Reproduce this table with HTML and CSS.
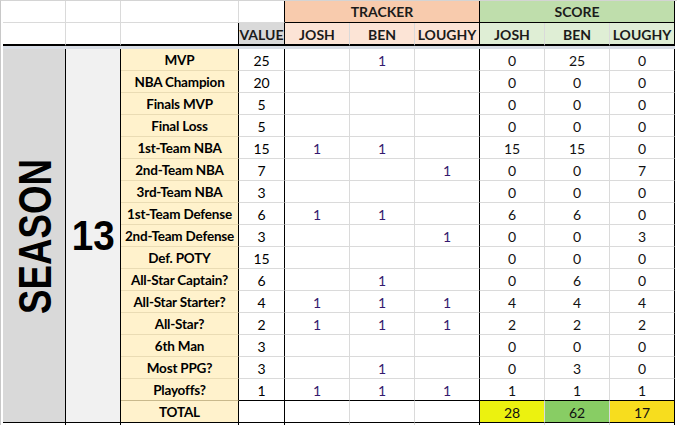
FILE: index.html
```html
<!DOCTYPE html>
<html>
<head>
<meta charset="utf-8">
<link rel="stylesheet" href="styles.css">
</head>
<body>
<div class="sheet">
  <!-- header row 1 -->
  <div class="c"></div><div class="c"></div><div class="c"></div><div class="c bR"></div>
  <div class="c h1 trkh span3 bR bB">TRACKER</div>
  <div class="c h1 scoh span3 bR bB">SCORE</div>
  <!-- header row 2 -->
  <div class="c h2row"></div><div class="c h2row"></div><div class="c h2row bR"></div>
  <div class="c h2row hdr valh bR">VALUE</div>
  <div class="c h2row hdr trks">JOSH</div><div class="c h2row hdr trks">BEN</div><div class="c h2row hdr trks bR">LOUGHY</div>
  <div class="c h2row hdr scos">JOSH</div><div class="c h2row hdr scos">BEN</div><div class="c h2row hdr scos bR">LOUGHY</div>
  <!-- frozen band -->
  <div class="band"></div>
  <!-- merged side cells -->
  <div class="c season"><span class="season-text">SEASON</span></div>
  <div class="c num"><span class="num-text">13</span></div>

  <div class="c lbl">MVP</div><div class="c val">25</div>
  <div class="c t"></div><div class="c t">1</div><div class="c t bR"></div>
  <div class="c s">0</div><div class="c s">25</div><div class="c s bR">0</div>

  <div class="c lbl">NBA Champion</div><div class="c val">20</div>
  <div class="c t"></div><div class="c t"></div><div class="c t bR"></div>
  <div class="c s">0</div><div class="c s">0</div><div class="c s bR">0</div>

  <div class="c lbl">Finals MVP</div><div class="c val">5</div>
  <div class="c t"></div><div class="c t"></div><div class="c t bR"></div>
  <div class="c s">0</div><div class="c s">0</div><div class="c s bR">0</div>

  <div class="c lbl">Final Loss</div><div class="c val">5</div>
  <div class="c t"></div><div class="c t"></div><div class="c t bR"></div>
  <div class="c s">0</div><div class="c s">0</div><div class="c s bR">0</div>

  <div class="c lbl">1st-Team NBA</div><div class="c val">15</div>
  <div class="c t">1</div><div class="c t">1</div><div class="c t bR"></div>
  <div class="c s">15</div><div class="c s">15</div><div class="c s bR">0</div>

  <div class="c lbl">2nd-Team NBA</div><div class="c val">7</div>
  <div class="c t"></div><div class="c t"></div><div class="c t bR">1</div>
  <div class="c s">0</div><div class="c s">0</div><div class="c s bR">7</div>

  <div class="c lbl">3rd-Team NBA</div><div class="c val">3</div>
  <div class="c t"></div><div class="c t"></div><div class="c t bR"></div>
  <div class="c s">0</div><div class="c s">0</div><div class="c s bR">0</div>

  <div class="c lbl">1st-Team Defense</div><div class="c val">6</div>
  <div class="c t">1</div><div class="c t">1</div><div class="c t bR"></div>
  <div class="c s">6</div><div class="c s">6</div><div class="c s bR">0</div>

  <div class="c lbl">2nd-Team Defense</div><div class="c val">3</div>
  <div class="c t"></div><div class="c t"></div><div class="c t bR">1</div>
  <div class="c s">0</div><div class="c s">0</div><div class="c s bR">3</div>

  <div class="c lbl">Def. POTY</div><div class="c val">15</div>
  <div class="c t"></div><div class="c t"></div><div class="c t bR"></div>
  <div class="c s">0</div><div class="c s">0</div><div class="c s bR">0</div>

  <div class="c lbl">All-Star Captain?</div><div class="c val">6</div>
  <div class="c t"></div><div class="c t">1</div><div class="c t bR"></div>
  <div class="c s">0</div><div class="c s">6</div><div class="c s bR">0</div>

  <div class="c lbl">All-Star Starter?</div><div class="c val">4</div>
  <div class="c t">1</div><div class="c t">1</div><div class="c t bR">1</div>
  <div class="c s">4</div><div class="c s">4</div><div class="c s bR">4</div>

  <div class="c lbl">All-Star?</div><div class="c val">2</div>
  <div class="c t">1</div><div class="c t">1</div><div class="c t bR">1</div>
  <div class="c s">2</div><div class="c s">2</div><div class="c s bR">2</div>

  <div class="c lbl">6th Man</div><div class="c val">3</div>
  <div class="c t"></div><div class="c t"></div><div class="c t bR"></div>
  <div class="c s">0</div><div class="c s">0</div><div class="c s bR">0</div>

  <div class="c lbl">Most PPG?</div><div class="c val">3</div>
  <div class="c t"></div><div class="c t">1</div><div class="c t bR"></div>
  <div class="c s">0</div><div class="c s">3</div><div class="c s bR">0</div>

  <div class="c lbl pre-lbl">Playoffs?</div><div class="c val bB">1</div>
  <div class="c t bB">1</div><div class="c t bB">1</div><div class="c t bR bB">1</div>
  <div class="c s bB">1</div><div class="c s bB">1</div><div class="c s bR bB">1</div>

  <div class="c lbl bB">TOTAL</div><div class="c val bB"></div>
  <div class="c t bB"></div><div class="c t bB"></div><div class="c t bR bB"></div>
  <div class="c s bB tot1">28</div><div class="c s bB tot2">62</div><div class="c s bR bB tot3">17</div>

  <!-- stub row -->
  <div class="c stub bR"></div><div class="c stub bR"></div><div class="c stub bR"></div><div class="c stub bR"></div>
  <div class="c stub"></div><div class="c stub"></div><div class="c stub bR"></div>
  <div class="c stub"></div><div class="c stub"></div><div class="c stub bR"></div>
</div>
</body>
</html>
```

FILE: styles.css
```css
* { box-sizing: border-box; }
html, body {
  margin: 0;
  padding: 0;
  background: #ffffff;
  width: 677px;
  height: 425px;
  overflow: hidden;
}
body {
  font-family: Lato, "Liberation Sans", sans-serif;
  font-size: 14px;
  color: #000;
}
.sheet {
  display: grid;
  grid-template-columns: 63px 55px 118px 46px 65px 65px 65px 65px 65px 65px;
  grid-template-rows: 22px 23px 3px repeat(17, 22px) 4px;
  border-top: 1px solid #d4d4d4;
  border-left: 1px solid #c8c8c8;
  padding-left: 2px;
  width: 677px;
}
.c {
  border-right: 1px solid #dadada;
  border-bottom: 1px solid #dadada;
  display: flex;
  align-items: center;
  justify-content: center;
  white-space: nowrap;
  padding-top: 1px;
}
.bR { border-right-color: #000; }
.bB { border-bottom-color: #000; }
.span3 { grid-column: span 3; }
.h1 { font-weight: 700; color: #1b1b1b; padding-top: 0; }
.trkh { background: #f8cbad; }
.scoh { background: #bfdeac; }
.h2row { border-bottom: 2px solid #000; }
.hdr { font-weight: 700; color: #1b1b1b; }
.valh { background: #d9d9d9; }
.trks { background: #fce4d6; }
.scos { background: #dfeed5; }
.band {
  grid-column: 1 / -1;
  background: #d9dee6;
}
.season {
  grid-row: 4 / span 17;
  grid-column: 1;
  background: #d9d9d9;
  border-right: 1px solid #000;
  border-bottom: 1px solid #000;
  overflow: hidden;
}
.season-text {
  display: block;
  font-family: "Liberation Sans", Arial, sans-serif;
  font-weight: 700;
  font-size: 47px;
  line-height: 1;
  transform: rotate(-90deg) scaleX(0.78);
}
.num {
  grid-row: 4 / span 17;
  grid-column: 2;
  background: #f1f1f1;
  border-right: 1px solid #000;
  border-bottom: 1px solid #000;
}
.num-text {
  display: block;
  font-family: "Liberation Sans", Arial, sans-serif;
  font-weight: 700;
  font-size: 42px;
  line-height: 1;
  transform: scaleX(0.92);
}
.lbl {
  background: #fff2cc;
  font-weight: 700;
  font-size: 13.5px;
  letter-spacing: -0.2px;
  border-right-color: #000;
  border-bottom-color: #eadcb4;
}
.lbl.pre-lbl { border-bottom-color: #c9b98c; }
.lbl.bB { border-bottom-color: #000; }
.val { border-right-color: #000; }
.t { color: #34196e; }
.s { color: #111; }
.tot1 { background: #ecf20f; }
.tot2 { background: #88cd64; }
.tot3 { background: #f7dd1e; }
.stub { border-bottom: none; }
```
